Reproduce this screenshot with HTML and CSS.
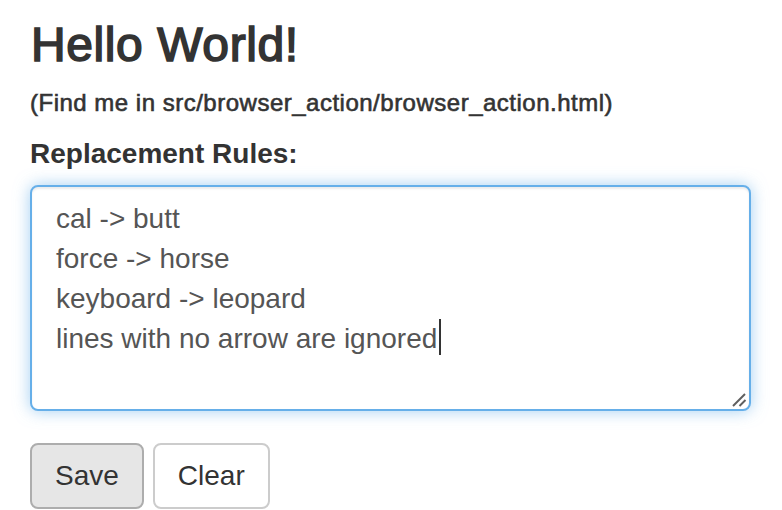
FILE: index.html
```html
<!DOCTYPE html>
<html>
<head>
<meta charset="utf-8">
<link rel="stylesheet" href="styles.css">
</head>
<body>
<div class="page">
  <h1 class="title">Hello World!</h1>
  <h6 class="note">(Find me in src/browser_action/browser_action.html)</h6>
  <form class="form">
    <div class="form-group">
      <label class="label">Replacement Rules:</label>
      <div class="textarea"><div class="line">cal -&gt; butt</div><div class="line">force -&gt; horse</div><div class="line">keyboard -&gt; leopard</div><div class="line">lines with no arrow are ignored<span class="caret"></span></div><svg class="grip" width="16" height="16" viewBox="0 0 16 16"><line x1="1" y1="14" x2="13" y2="2"/><line x1="7.5" y1="14" x2="13.5" y2="8"/></svg></div>
    </div>
    <div class="actions">
      <button type="button" class="btn btn-active">Save</button>
      <button type="button" class="btn">Clear</button>
    </div>
  </form>
</div>
</body>
</html>
```

FILE: styles.css
```css
* { box-sizing: border-box; }
html, body { margin: 0; background: #fff; }
body {
  font-family: "Liberation Sans", Arial, Helvetica, sans-serif;
  color: #333;
  overflow: hidden;
}
.page {
  padding: 0 31px 0 30px;
}
.title {
  margin: 19px 0 0 1px;
  font-size: 48px;
  line-height: 52.8px;
  font-weight: normal;
  letter-spacing: 0.6px;
  -webkit-text-stroke: 1.6px #333;
  color: #333;
}
.note {
  margin: 18px 0 0;
  font-size: 24px;
  line-height: 26.4px;
  font-weight: normal;
  letter-spacing: 0.5px;
  -webkit-text-stroke: 0.6px #333;
  color: #333;
}
.form { margin: 0; }
.form-group { margin: 0; }
.label {
  display: block;
  margin: 18px 0 11px;
  font-size: 28px;
  line-height: 40px;
  font-weight: bold;
}
.textarea {
  position: relative;
  height: 226px;
  width: 100%;
  padding: 12px 24px;
  border: 2px solid #66afe9;
  border-radius: 8px;
  box-shadow: inset 0 2px 2px rgba(0,0,0,.075), 0 0 16px rgba(102,175,233,.6);
  font-size: 28px;
  line-height: 40px;
  color: #555;
  background: #fff;
  overflow: hidden;
}
.line { white-space: pre; }
.caret {
  display: inline-block;
  width: 2px;
  height: 36px;
  background: #333;
  vertical-align: -7px;
  margin-left: 2px;
}
.grip {
  position: absolute;
  right: 1px;
  bottom: 1px;
  stroke: #5f5f5f;
  stroke-width: 2;
}
.actions {
  display: flex;
  gap: 9px;
  margin-top: 32px;
}
.btn {
  font-family: inherit;
  font-size: 28px;
  line-height: 40px;
  padding: 11px 23px;
  border: 2px solid #ccc;
  border-radius: 8px;
  background: #fff;
  color: #333;
  margin: 0;
}
.btn-active {
  background: #e6e6e6;
  border-color: #adadad;
}
```
